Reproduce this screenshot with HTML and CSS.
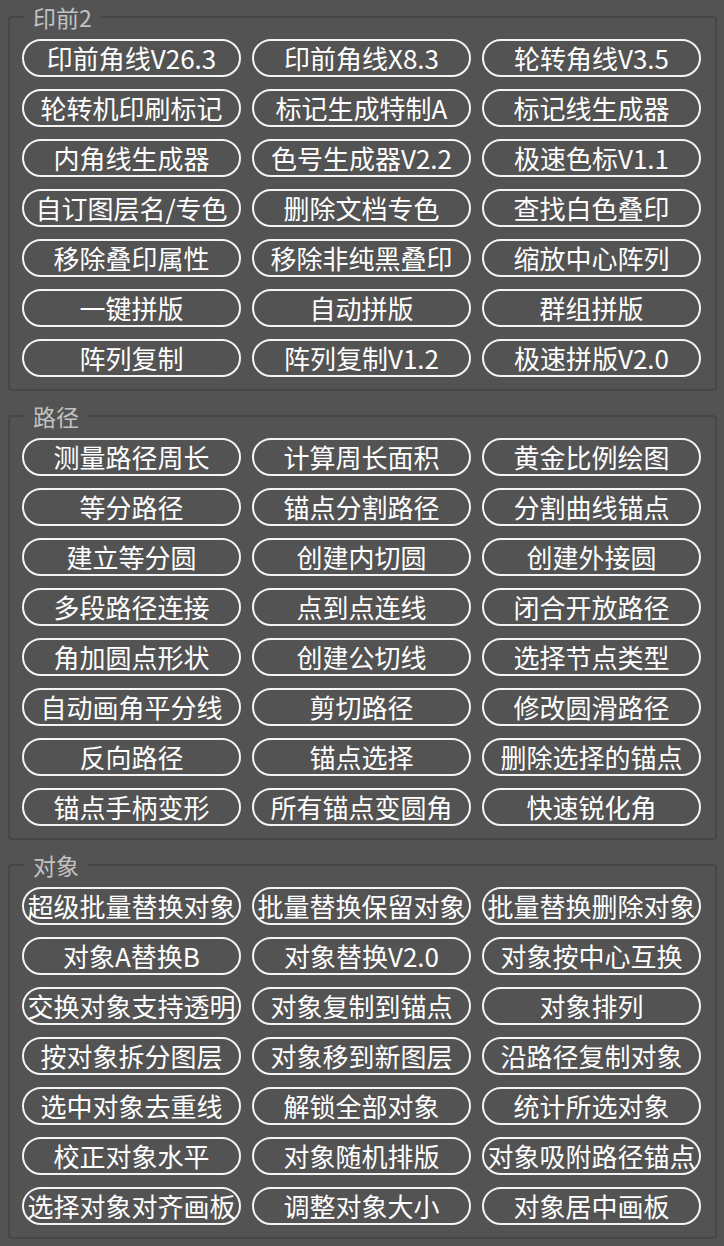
FILE: index.html
```html
<!DOCTYPE html>
<html lang="zh-CN">
<head>
    <meta charset="UTF-8">
    <meta name="viewport" content="width=device-width, initial-scale=1.0">
    <title>脚本面板</title>
    <link rel="stylesheet" href="styles.css">
</head>
<body>
    <div id="panel">
        <!-- 印前 -->
        <fieldset class="group">
            <legend>印前2</legend>
            <div class="btnGrid">
                <button>印前角线V26.3</button>
                <button>印前角线X8.3</button>
                <button>轮转角线V3.5</button>
                <button>轮转机印刷标记</button>
                <button>标记生成特制A</button>
                <button>标记线生成器</button>
                <button>内角线生成器</button>
                <button>色号生成器V2.2</button>
                <button>极速色标V1.1</button>
                <button>自订图层名/专色</button>
                <button>删除文档专色</button>
                <button>查找白色叠印</button>
                <button>移除叠印属性</button>
                <button>移除非纯黑叠印</button>
                <button>缩放中心阵列</button>
                <button>一键拼版</button>
                <button>自动拼版</button>
                <button>群组拼版</button>
                <button>阵列复制</button>
                <button>阵列复制V1.2</button>
                <button>极速拼版V2.0</button>
            </div>
        </fieldset>
        <!-- 路径 -->
        <fieldset class="group">
            <legend>路径</legend>
            <div class="btnGrid">
                <button>测量路径周长</button>
                <button>计算周长面积</button>
                <button>黄金比例绘图</button>
                <button>等分路径</button>
                <button>锚点分割路径</button>
                <button>分割曲线锚点</button>
                <button>建立等分圆</button>
                <button>创建内切圆</button>
                <button>创建外接圆</button>
                <button>多段路径连接</button>
                <button>点到点连线</button>
                <button>闭合开放路径</button>
                <button>角加圆点形状</button>
                <button>创建公切线</button>
                <button>选择节点类型</button>
                <button>自动画角平分线</button>
                <button>剪切路径</button>
                <button>修改圆滑路径</button>
                <button>反向路径</button>
                <button>锚点选择</button>
                <button>删除选择的锚点</button>
                <button>锚点手柄变形</button>
                <button>所有锚点变圆角</button>
                <button>快速锐化角</button>
            </div>
        </fieldset>
        <!-- 对象 -->
        <fieldset class="group">
            <legend>对象</legend>
            <div class="btnGrid">
                <button>超级批量替换对象</button>
                <button>批量替换保留对象</button>
                <button>批量替换删除对象</button>
                <button>对象A替换B</button>
                <button>对象替换V2.0</button>
                <button>对象按中心互换</button>
                <button>交换对象支持透明</button>
                <button>对象复制到锚点</button>
                <button>对象排列</button>
                <button>按对象拆分图层</button>
                <button>对象移到新图层</button>
                <button>沿路径复制对象</button>
                <button>选中对象去重线</button>
                <button>解锁全部对象</button>
                <button>统计所选对象</button>
                <button>校正对象水平</button>
                <button>对象随机排版</button>
                <button>对象吸附路径锚点</button>
                <button>选择对象对齐画板</button>
                <button>调整对象大小</button>
                <button>对象居中画板</button>
            </div>
        </fieldset>
    </div>
</body>
</html>
```
FILE: styles.css
```css
/* Reset */
*, *:before, *:after {
    box-sizing: border-box;
}
html, body {
    margin: 0;
    padding: 0;
}
body {
    background-color: #535353;
    font-family: "Noto Sans CJK SC", "Noto Sans", sans-serif;
    color: #fff;
}

#panel {
    padding: 2px 7px 0 8px;
}

.group {
    margin: 0 0 10px 0;
    padding: 7px 14px 12px 12px;
    border: 2px solid #474747;
    border-radius: 4px;
}
.group legend {
    margin-left: 3px;
    padding: 0 8px;
    font-size: 23px;
    line-height: 30px;
    color: #c2c2c2;
}

.btnGrid {
    display: grid;
    grid-template-columns: repeat(3, 1fr);
    column-gap: 11px;
    row-gap: 12px;
}

button {
    height: 38px;
    padding: 0;
    border: 2px solid #f4f4f4;
    border-radius: 19px;
    background: transparent;
    color: #fff;
    font-family: inherit;
    font-size: 26px;
    line-height: 32px;
    white-space: nowrap;
    overflow: visible;
    cursor: pointer;
}
```
